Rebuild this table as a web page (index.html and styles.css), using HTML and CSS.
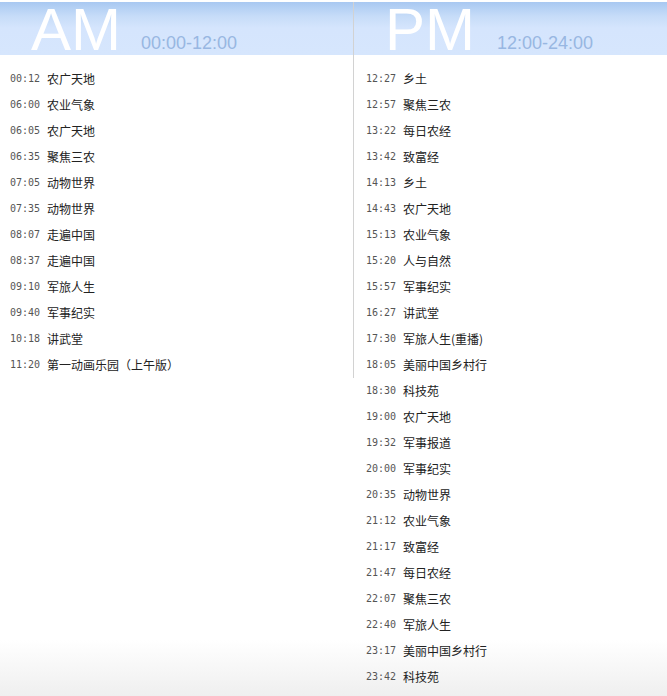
FILE: index.html
```html
<!DOCTYPE html>
<html lang="zh-CN">
<head>
<meta charset="utf-8">
<title>节目表</title>
<link rel="stylesheet" href="styles.css">
</head>
<body>
<div class="schedule">
  <section class="col col-am">
    <header class="band">
      <span class="big">AM</span>
      <span class="range">00:00-12:00</span>
    </header>
    <ul class="list">
      <li><span class="t">00:12</span><span class="n">农广天地</span></li>
      <li><span class="t">06:00</span><span class="n">农业气象</span></li>
      <li><span class="t">06:05</span><span class="n">农广天地</span></li>
      <li><span class="t">06:35</span><span class="n">聚焦三农</span></li>
      <li><span class="t">07:05</span><span class="n">动物世界</span></li>
      <li><span class="t">07:35</span><span class="n">动物世界</span></li>
      <li><span class="t">08:07</span><span class="n">走遍中国</span></li>
      <li><span class="t">08:37</span><span class="n">走遍中国</span></li>
      <li><span class="t">09:10</span><span class="n">军旅人生</span></li>
      <li><span class="t">09:40</span><span class="n">军事纪实</span></li>
      <li><span class="t">10:18</span><span class="n">讲武堂</span></li>
      <li><span class="t">11:20</span><span class="n">第一动画乐园（上午版）</span></li>
    </ul>
  </section>
  <section class="col col-pm">
    <header class="band">
      <span class="big">PM</span>
      <span class="range">12:00-24:00</span>
    </header>
    <ul class="list">
      <li><span class="t">12:27</span><span class="n">乡土</span></li>
      <li><span class="t">12:57</span><span class="n">聚焦三农</span></li>
      <li><span class="t">13:22</span><span class="n">每日农经</span></li>
      <li><span class="t">13:42</span><span class="n">致富经</span></li>
      <li><span class="t">14:13</span><span class="n">乡土</span></li>
      <li><span class="t">14:43</span><span class="n">农广天地</span></li>
      <li><span class="t">15:13</span><span class="n">农业气象</span></li>
      <li><span class="t">15:20</span><span class="n">人与自然</span></li>
      <li><span class="t">15:57</span><span class="n">军事纪实</span></li>
      <li><span class="t">16:27</span><span class="n">讲武堂</span></li>
      <li><span class="t">17:30</span><span class="n">军旅人生(重播)</span></li>
      <li><span class="t">18:05</span><span class="n">美丽中国乡村行</span></li>
      <li><span class="t">18:30</span><span class="n">科技苑</span></li>
      <li><span class="t">19:00</span><span class="n">农广天地</span></li>
      <li><span class="t">19:32</span><span class="n">军事报道</span></li>
      <li><span class="t">20:00</span><span class="n">军事纪实</span></li>
      <li><span class="t">20:35</span><span class="n">动物世界</span></li>
      <li><span class="t">21:12</span><span class="n">农业气象</span></li>
      <li><span class="t">21:17</span><span class="n">致富经</span></li>
      <li><span class="t">21:47</span><span class="n">每日农经</span></li>
      <li><span class="t">22:07</span><span class="n">聚焦三农</span></li>
      <li><span class="t">22:40</span><span class="n">军旅人生</span></li>
      <li><span class="t">23:17</span><span class="n">美丽中国乡村行</span></li>
      <li><span class="t">23:42</span><span class="n">科技苑</span></li>
    </ul>
  </section>
</div>
</body>
</html>
```

FILE: styles.css
```css
html {
  background: linear-gradient(to bottom, #ffffff 0, #ffffff 640px, #efefef 696px) no-repeat;
  min-height: 696px;
}
body {
  margin: 0;
  padding-top: 2px;
  font-family: "Noto Sans CJK SC", "Liberation Sans", sans-serif;
  color: #222;
}
.schedule {
  display: flex;
  align-items: flex-start;
}
.col-am {
  width: 353px;
  border-right: 1px solid #d2d2d2;
}
.col-pm {
  flex: 1;
}
.band {
  height: 53px;
  display: flex;
  align-items: flex-end;
  gap: 20px;
  padding-left: 31px;
  background: linear-gradient(to bottom, #a8c8f1 0, #c6dcf8 14px, #d5e5fd 26px, #d6e6fd 100%);
  box-sizing: border-box;
}
.col-pm .band {
  padding-left: 31px;
  gap: 22px;
}
.big {
  font-family: "Liberation Sans", Arial, sans-serif;
  font-size: 60px;
  line-height: 45px;
  color: #ffffff;
  margin-bottom: 3px;
}
.range {
  font-family: "Liberation Sans", Arial, sans-serif;
  font-size: 18px;
  line-height: 18px;
  color: #98b7e2;
  margin-bottom: 3px;
}
.list {
  list-style: none;
  margin: 0;
  padding: 11px 0 0 10px;
}
.col-pm .list {
  padding-left: 12px;
}
.list li {
  height: 26px;
  line-height: 26px;
  display: flex;
  align-items: center;
  white-space: nowrap;
}
.t {
  font-family: "DejaVu Sans Mono", "Liberation Mono", monospace;
  font-size: 10px;
  color: #555;
  width: 37px;
  flex: none;
}
.n {
  font-size: 12px;
  color: #222;
}
```
